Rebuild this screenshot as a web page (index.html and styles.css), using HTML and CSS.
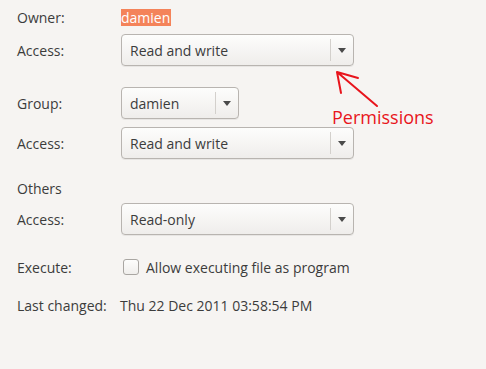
FILE: index.html
```html
<!DOCTYPE html>
<html lang="en">
<head>
  <meta charset="UTF-8" />
  <title>Permissions</title>
  <link rel="stylesheet" href="styles.css">
</head>
<body>
  <main class="perms">
    <div class="row owner-row">
      <span class="label">Owner:</span>
      <span class="owner-name">damien</span>
    </div>

    <div class="row access-1">
      <span class="label">Access:</span>
      <div class="combo wide">
        <span class="combo-text">Read and write</span>
        <span class="combo-arrow"></span>
      </div>
    </div>

    <div class="row group-row">
      <span class="label">Group:</span>
      <div class="combo narrow">
        <span class="combo-text">damien</span>
        <span class="combo-arrow"></span>
      </div>
    </div>

    <div class="row access-2">
      <span class="label">Access:</span>
      <div class="combo wide">
        <span class="combo-text">Read and write</span>
        <span class="combo-arrow"></span>
      </div>
    </div>

    <div class="row others-row">
      <span class="label">Others</span>
    </div>

    <div class="row access-3">
      <span class="label">Access:</span>
      <div class="combo wide">
        <span class="combo-text">Read-only</span>
        <span class="combo-arrow"></span>
      </div>
    </div>

    <div class="row exec-row">
      <span class="label">Execute:</span>
      <label class="check">
        <span class="check-box"></span>
        Allow executing file as program
      </label>
    </div>

    <div class="row changed-row">
      <span class="label">Last changed:</span>
      <span class="value">Thu 22 Dec 2011 03:58:54 PM</span>
    </div>
  </main>

  <div class="note">
    <svg class="note-arrow" width="60" height="50" viewBox="0 0 60 50">
      <path d="M3 4 L43 38 M3 4 L24 10 M3 4 L7 25" fill="none" stroke="#e8141c" stroke-width="2" stroke-linecap="round"/>
    </svg>
    <span class="note-text">Permissions</span>
  </div>
</body>
</html>
```

FILE: styles.css
```css
body {
  margin: 0;
  background: #f6f4f2;
  font-family: 'Open Sans', sans-serif;
  font-size: 14px;
  color: #3c3c3c;
  position: relative;
  height: 369px;
  overflow: hidden;
}
.perms {
  display: flex;
  flex-direction: column;
  padding: 9px 0 0 17px;
}
.row {
  display: flex;
  align-items: center;
}
.label {
  width: 104px;
  flex-shrink: 0;
}
.owner-row {
  height: 17px;
}
.owner-name {
  background: #f4835a;
  color: #fff;
  line-height: 17px;
  padding: 0 1px 0 0;
}
.access-1 {
  margin-top: 8px;
}
.group-row {
  margin-top: 21px;
}
.access-2 {
  margin-top: 8px;
}
.others-row {
  margin-top: 21px;
  height: 16px;
}
.access-3 {
  margin-top: 7px;
}
.exec-row {
  margin-top: 23px;
  height: 18px;
}
.changed-row {
  margin-top: 20px;
  height: 18px;
}
.value {
  margin-left: -1px;
}
.combo {
  display: flex;
  align-items: center;
  height: 32px;
  box-sizing: border-box;
  border: 1px solid #b8b4b0;
  border-radius: 4px;
  background: linear-gradient(#fdfdfc, #efedeb);
  box-shadow: 0 1px 0 rgba(0, 0, 0, 0.06);
}
.combo.wide {
  width: 233px;
}
.combo.narrow {
  width: 118px;
}
.combo-text {
  flex: 1;
  padding-left: 8px;
}
.combo-arrow {
  width: 22px;
  height: 22px;
  border-left: 1px solid #d3d0cc;
  position: relative;
}
.combo-arrow::after {
  content: '';
  position: absolute;
  left: 7px;
  top: 9px;
  border-left: 4px solid transparent;
  border-right: 4px solid transparent;
  border-top: 5px solid #4a4a4a;
}
.check {
  display: flex;
  align-items: center;
  gap: 7px;
  margin-left: 2px;
}
.check-box {
  width: 16px;
  height: 16px;
  box-sizing: border-box;
  border: 1px solid #a9a6a2;
  border-radius: 3px;
  background: linear-gradient(#fdfdfc, #f0eeec);
}
.note-arrow {
  position: absolute;
  left: 334px;
  top: 68px;
}
.note-text {
  position: absolute;
  left: 332px;
  top: 105px;
  color: #e8141c;
  font-size: 18px;
  font-family: 'Open Sans', sans-serif;
}
```
